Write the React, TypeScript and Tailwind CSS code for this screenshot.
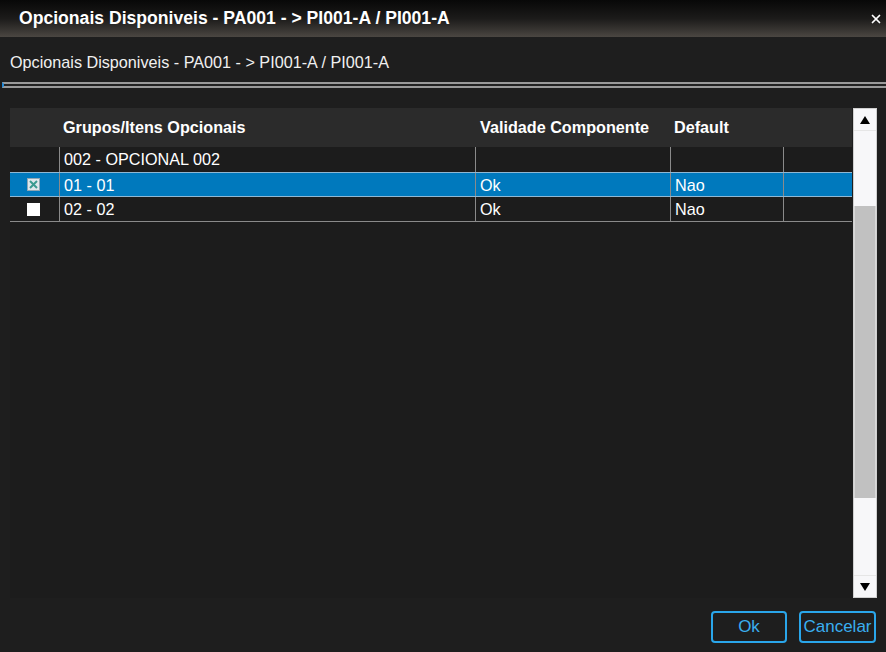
import { X } from 'lucide-react';

interface Row {
  id: string;
  label: string;
  validade: string;
  padrao: string;
  kind: 'group' | 'item';
  checked?: boolean;
  selected?: boolean;
}

const ROWS: Row[] = [
  { id: 'g002', label: '002 - OPCIONAL 002', validade: '', padrao: '', kind: 'group' },
  { id: 'i01', label: '01 - 01', validade: 'Ok', padrao: 'Nao', kind: 'item', checked: true, selected: true },
  { id: 'i02', label: '02 - 02', validade: 'Ok', padrao: 'Nao', kind: 'item' },
];

const FONT = "font-['Liberation_Sans',Arial,sans-serif]";

function CheckBox({ checked }: { checked?: boolean }) {
  if (checked) {
    return (
      <span className="flex h-[13px] w-[13px] items-center justify-center border border-[#8fa6b4] bg-[#dfe7ec]">
        <svg width="11" height="11" viewBox="0 0 11 11" aria-hidden="true">
          <path d="M2 2 L9 9 M9 2 L2 9" stroke="#3a9a90" strokeWidth="2" />
        </svg>
      </span>
    );
  }
  return <span className="block h-[13px] w-[13px] bg-white" />;
}

function Arrow({ up }: { up?: boolean }) {
  return (
    <svg width="10" height="8" viewBox="0 0 10 8" aria-hidden="true">
      <path d={up ? 'M5 0 L10 8 L0 8 Z' : 'M0 0 L10 0 L5 8 Z'} fill="#000" />
    </svg>
  );
}

export default function App() {
  return (
    <div className={`${FONT} flex h-[652px] w-[886px] flex-col bg-[#1e1e1e] text-white`}>
      {/* title bar */}
      <div className="flex h-[37px] shrink-0 items-center justify-between bg-gradient-to-b from-[#080808] via-[#1c1b1a] to-[#4b4742] pl-[19px] pr-[3px]">
        <span className="text-[17.6px] font-bold leading-none">Opcionais Disponiveis - PA001 - &gt; PI001-A / PI001-A</span>
        <X size={14} strokeWidth={3} className="text-white" />
      </div>

      {/* subtitle */}
      <div className="pl-[10px] pt-[15px] text-[16.2px] leading-[20px] text-[#f0f0f0]">
        Opcionais Disponiveis - PA001 - &gt; PI001-A / PI001-A
      </div>
      <div className="ml-[2px] mt-[10px] h-[6px] border-y-2 border-l-2 border-y-[#9a9a9a] border-l-[#1e88d8] bg-[#222]" />

      {/* grid + scrollbar */}
      <div className="ml-[10px] mt-[20px] flex h-[490px] w-[867px]">
        <div className="flex w-[842px] flex-col bg-[#1c1c1c]">
          <div className="flex h-[39px] shrink-0 items-center bg-[#2b2b2b] text-[16.2px] font-bold">
            <div className="w-[49px]" />
            <div className="w-[416px] pl-[4px]">Grupos/Itens Opcionais</div>
            <div className="w-[195px] pl-[5px]">Validade Componente</div>
            <div className="w-[113px] pl-[4px]">Default</div>
            <div className="flex-1" />
          </div>
          {ROWS.map((row) => (
            <div
              key={row.id}
              className={`flex h-[25px] text-[16.2px] leading-[24px] ${row.selected ? 'border-y border-[#8fb8d4] bg-[#0079bd]' : 'border-b border-[#8a8a8a]'} ${row.kind === 'group' ? 'border-b-0' : ''}`}
            >
              <div className="flex w-[49px] items-center justify-center pr-[2px]">
                {row.kind === 'item' && <CheckBox checked={row.checked} />}
              </div>
              <div className="w-[416px] border-l border-[#8a8a8a] pl-[4px]">{row.label}</div>
              <div className="w-[195px] border-l border-[#8a8a8a] pl-[4px]">{row.validade}</div>
              <div className="w-[113px] border-l border-[#8a8a8a] pl-[4px]">{row.padrao}</div>
              <div className="flex-1 border-l border-[#8a8a8a]" />
            </div>
          ))}
        </div>

        <div className="ml-px flex w-[24px] flex-col border border-[#d0d0d0] bg-[#f7f7f9]">
          <div className="flex h-[22px] items-center justify-center border-b border-[#e6e6e6]">
            <Arrow up />
          </div>
          <div className="mt-[75px] h-[292px] border-x border-[#d8d8d8] bg-[#c1c1c1]" />
          <div className="flex-1" />
          <div className="flex h-[22px] items-center justify-center border-t border-[#e6e6e6]">
            <Arrow />
          </div>
        </div>
      </div>

      {/* buttons */}
      <div className="mt-[13px] flex justify-end gap-[12px] pr-[10px]">
        <button className="h-[32px] w-[76px] rounded-[4px] border-2 border-[#2aa6ea] text-[17px] text-[#3aaef0]">Ok</button>
        <button className="h-[32px] w-[77px] rounded-[4px] border-2 border-[#2aa6ea] text-[17px] text-[#3aaef0]">Cancelar</button>
      </div>
    </div>
  );
}
